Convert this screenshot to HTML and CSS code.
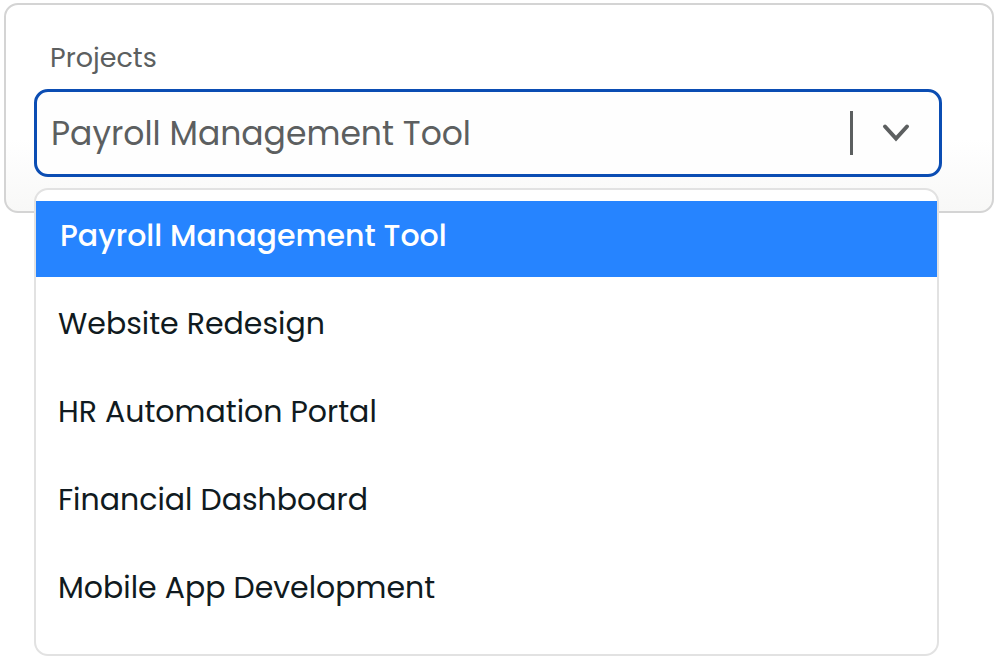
FILE: index.html
```html
<!DOCTYPE html>
<html lang="en">
<head>
<meta charset="utf-8">
<meta name="viewport" content="width=device-width, initial-scale=1">
<title>Projects</title>
<link rel="stylesheet" href="styles.css">
</head>
<body>
<main class="card">
  <label class="label" for="project">Projects</label>
  <div class="picker">
    <div class="field">
      <select class="select" id="project">
        <option selected>Payroll Management Tool</option>
        <option>Website Redesign</option>
        <option>HR Automation Portal</option>
        <option>Financial Dashboard</option>
        <option>Mobile App Development</option>
      </select>
      <span class="divider"></span>
      <svg class="chevron" viewBox="0 0 30 20" aria-hidden="true"><path d="M4 3.500 15 15.500 26 3.500"/></svg>
    </div>
    <div class="menu" role="listbox" aria-label="Projects">
      <button class="item item-active" type="button" role="option" aria-selected="true">Payroll Management Tool</button>
      <button class="item" type="button" role="option" aria-selected="false">Website Redesign</button>
      <button class="item" type="button" role="option" aria-selected="false">HR Automation Portal</button>
      <button class="item" type="button" role="option" aria-selected="false">Financial Dashboard</button>
      <button class="item" type="button" role="option" aria-selected="false">Mobile App Development</button>
    </div>
  </div>
</main>
</body>
</html>
```
FILE: styles.css
```css
* {
  box-sizing: border-box;
}

body {
  min-height: 100vh;
  margin: 0;
  padding: 3px 6px 3px 4px;
  background: #fff;
  font-family: Poppins, Inter, sans-serif;
}

.card {
  padding: 33px 50px 34px 28px;
  border: 2px solid #d4d4d4;
  border-radius: 14px;
  background: linear-gradient(#fff 65%, #f8f8f7);
}

.label {
  display: block;
  padding: 0 16px;
  margin-bottom: 11px;
  color: #5c5f60;
  font-size: 27px;
  line-height: 40px;
}

.picker {
  position: relative;
}

.field {
  display: grid;
  grid-template-columns: 1fr 3px 86px;
  align-items: center;
  height: 88px;
  border: 3px solid #0b4db3;
  border-radius: 14px;
  background: #fefefe;
}

.select {
  grid-area: 1 / 1 / 2 / 4;
  width: 100%;
  height: 100%;
  padding: 0 90px 0 14px;
  border: 0;
  border-radius: 11px;
  outline: 0;
  appearance: none;
  background: transparent;
  color: #5c5f60;
  font: inherit;
  font-size: 33px;
}

.divider {
  grid-area: 1 / 2;
  height: 44px;
  background: #5c5f60;
  pointer-events: none;
}

.chevron {
  grid-area: 1 / 3;
  justify-self: center;
  width: 30px;
  height: 20px;
  fill: none;
  stroke: #5c5f60;
  stroke-width: 4;
  stroke-linecap: round;
  stroke-linejoin: miter;
  pointer-events: none;
}

.menu {
  position: absolute;
  top: 100%;
  left: 0;
  right: 3px;
  display: flex;
  flex-direction: column;
  margin-top: 11px;
  padding: 11px 0 22px;
  border: 2px solid #e2e2e2;
  border-radius: 14px;
  background: #fff;
}

.item {
  height: 88px;
  padding: 0 22px;
  border: 0;
  background: #fff;
  color: #101a20;
  font: inherit;
  font-size: 30px;
  text-align: left;
}

.item-active {
  height: 76px;
  margin-bottom: 3px;
  padding: 0 24px 6px;
  background: #2684ff;
  color: #fff;
  font-weight: 500;
}
```
